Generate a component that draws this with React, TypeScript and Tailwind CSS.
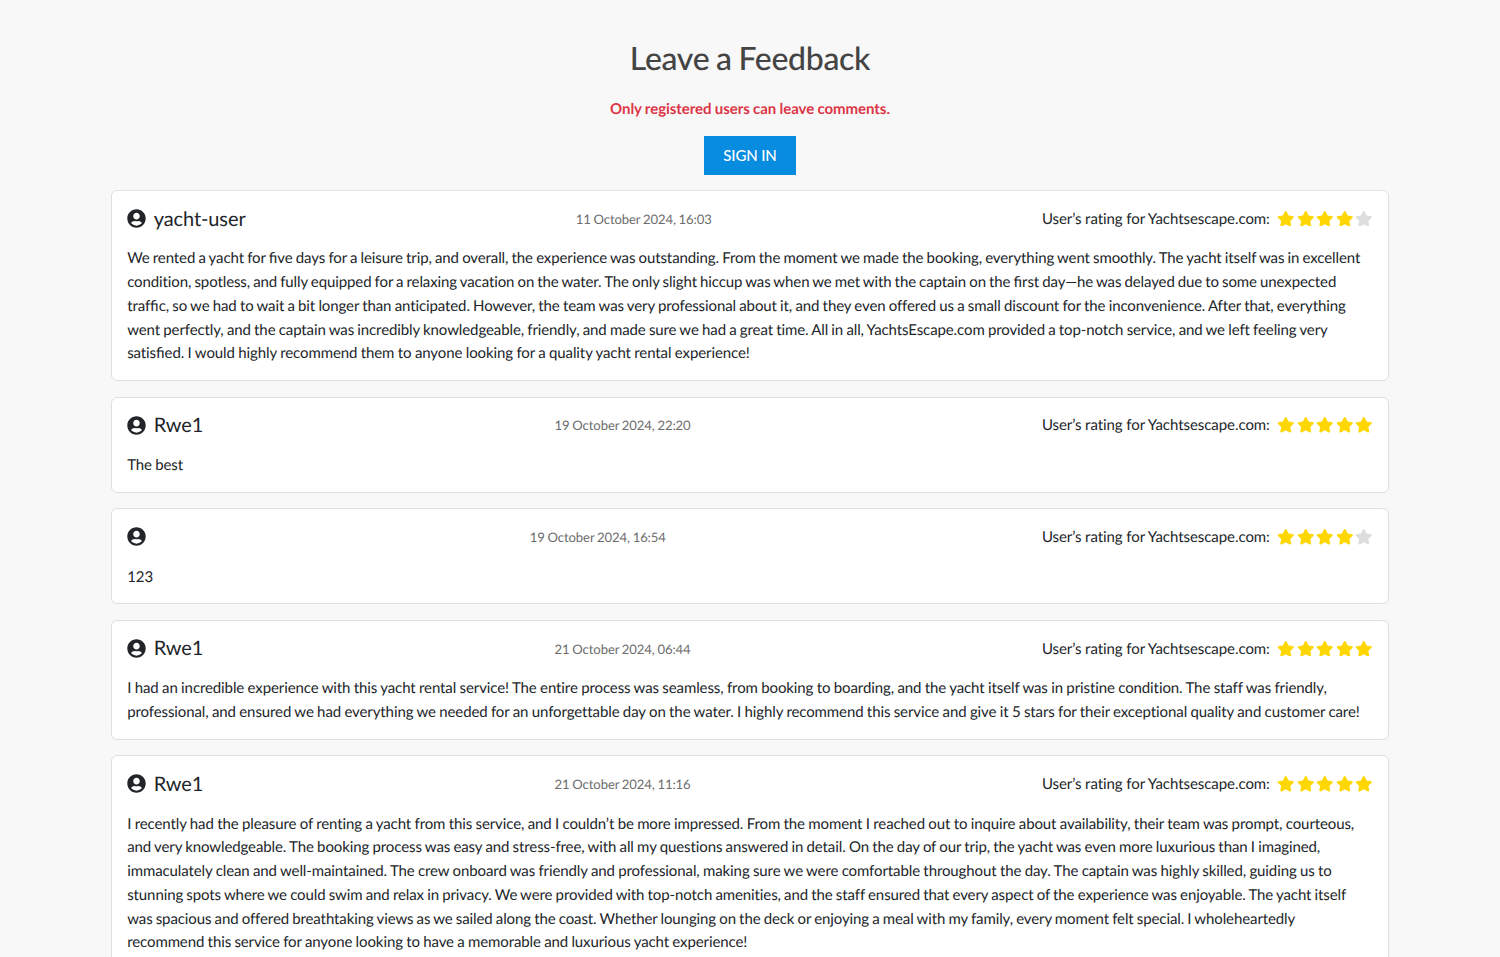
import React from "react";

type TextLine = { text: string; width?: number };
type Review = { user: string; date: string; rating: number; lines: TextLine[] };

const reviews: Review[] = [
  {
    user: "yacht-user",
    date: "11 October 2024, 16:03",
    rating: 4,
    lines: [
      { width: 1233, text: "We rented a yacht for five days for a leisure trip, and overall, the experience was outstanding. From the moment we made the booking, everything went smoothly. The yacht itself was in excellent" },
      { width: 1209, text: "condition, spotless, and fully equipped for a relaxing vacation on the water. The only slight hiccup was when we met with the captain on the first day—he was delayed due to some unexpected" },
      { width: 1218.5, text: "traffic, so we had to wait a bit longer than anticipated. However, the team was very professional about it, and they even offered us a small discount for the inconvenience. After that, everything" },
      { width: 1200.5, text: "went perfectly, and the captain was incredibly knowledgeable, friendly, and made sure we had a great time. All in all, YachtsEscape.com provided a top-notch service, and we left feeling very" },
      { width: 622.5, text: "satisfied. I would highly recommend them to anyone looking for a quality yacht rental experience!" },
    ],
  },
  { user: "Rwe1", date: "19 October 2024, 22:20", rating: 5, lines: [{ text: "The best" }] },
  { user: "", date: "19 October 2024, 16:54", rating: 4, lines: [{ text: "123" }] },
  {
    user: "Rwe1",
    date: "21 October 2024, 06:44",
    rating: 5,
    lines: [
      { width: 1199.5, text: "I had an incredible experience with this yacht rental service! The entire process was seamless, from booking to boarding, and the yacht itself was in pristine condition. The staff was friendly," },
      { width: 1232.5, text: "professional, and ensured we had everything we needed for an unforgettable day on the water. I highly recommend this service and give it 5 stars for their exceptional quality and customer care!" },
    ],
  },
  {
    user: "Rwe1",
    date: "21 October 2024, 11:16",
    rating: 5,
    lines: [
      { width: 1227, text: "I recently had the pleasure of renting a yacht from this service, and I couldn’t be more impressed. From the moment I reached out to inquire about availability, their team was prompt, courteous," },
      { width: 1193, text: "and very knowledgeable. The booking process was easy and stress-free, with all my questions answered in detail. On the day of our trip, the yacht was even more luxurious than I imagined," },
      { width: 1204.5, text: "immaculately clean and well-maintained. The crew onboard was friendly and professional, making sure we were comfortable throughout the day. The captain was highly skilled, guiding us to" },
      { width: 1219, text: "stunning spots where we could swim and relax in privacy. We were provided with top-notch amenities, and the staff ensured that every aspect of the experience was enjoyable. The yacht itself" },
      { width: 1168, text: "was spacious and offered breathtaking views as we sailed along the coast. Whether lounging on the deck or enjoying a meal with my family, every moment felt special. I wholeheartedly" },
      { width: 620, text: "recommend this service for anyone looking to have a memorable and luxurious yacht experience!" },
    ],
  },
];

function UserIcon() {
  return (
    <svg viewBox="0 0 496 512" className="h-[19px] w-[19px] shrink-0 fill-[#212529]">
      <path d="M248 8C111 8 0 119 0 256s111 248 248 248 248-111 248-248S385 8 248 8zm0 96c48.600 0 88 39.400 88 88s-39.400 88-88 88-88-39.400-88-88 39.400-88 88-88zm0 344c-58.700 0-111.300-26.600-146.500-68.200 18.800-35.400 55.600-59.800 98.500-59.800 2.400 0 4.800.4 7.100 1.100 13 4.200 26.600 6.900 40.900 6.900 14.300 0 28-2.700 40.900-6.900 2.300-.7 4.700-1.100 7.100-1.100 42.900 0 79.700 24.400 98.500 59.800C359.300 421.400 306.700 448 248 448z" />
    </svg>
  );
}

function Star({ on }: { on: boolean }) {
  return (
    <svg viewBox="0 0 576 512" className={`h-[15.500px] w-[17.500px] shrink-0 ${on ? "fill-[#ffd700]" : "fill-[#dddddd]"}`}>
      <path d="M259.300 17.800L194 150.200 47.900 171.500c-26.200 3.800-36.700 36.100-17.700 54.600l105.700 103-25 145.500c-4.500 26.300 23.200 46 46.400 33.700L288 439.600l130.700 68.700c23.200 12.200 50.900-7.400 46.400-33.700l-25-145.500 105.700-103c19-18.500 8.500-50.800-17.700-54.600L382 150.200 316.700 17.800c-11.700-23.600-45.600-23.900-57.400 0z" />
    </svg>
  );
}

// Joins only the "fi" pairs; every other ligature stays off.
function Line({ line }: { line: TextLine }) {
  return (
    <span
      className={line.width ? "block [text-align-last:justify] [word-spacing:-0.9px]" : "block"}
      style={{ width: line.width }}
    >
      {line.text.split(/(fi)/).map((part, i) =>
        part === "fi" ? (
          <span key={i} className="tracking-normal [font-variant-ligatures:common-ligatures]">fi</span>
        ) : (
          part
        ),
      )}
    </span>
  );
}

function ReviewCard({ review }: { review: Review }) {
  return (
    <article className="mb-[15.700px] rounded-md border border-[#dfdfdf] bg-white px-[15.200px] pt-[15.500px] pb-[13.900px]">
      <header className="flex h-6 items-center justify-between">
        <h2 className="flex items-center gap-[7.500px] text-[20px] leading-6 tracking-[-0.1px]">
          <UserIcon />
          <span>{review.user}</span>
        </h2>
        <time className="pt-[2px] text-[13.100px] tracking-[-0.1px] text-[#6c6c6c] [word-spacing:-0.500px]">{review.date}</time>
        <div className="flex items-center text-[15px]">
          <span className="mr-[7.500px] pt-px tracking-[-0.060px] [word-spacing:-0.1px]">User’s rating for Yachtsescape.com:</span>
          <div className="flex gap-[2px]">
            {[1, 2, 3, 4, 5].map((n) => (
              <Star key={n} on={n <= review.rating} />
            ))}
          </div>
        </div>
      </header>
      <p className="mt-[16.900px] text-[15px] leading-[23.700px] tracking-[-0.1px] whitespace-nowrap [word-spacing:-0.500px]">
        {review.lines.map((line) => (
          <Line key={line.text} line={line} />
        ))}
      </p>
    </article>
  );
}

export default function App() {
  return (
    <main className="h-[957px] overflow-hidden bg-[#f8f8f8] font-['Lato',sans-serif] text-[#212529] [font-variant-ligatures:none] [text-rendering:geometricPrecision]">
      <div className="mx-auto flex w-[1278px] flex-col">
        <h1 className="mt-[38px] text-center text-[32px] leading-10 font-medium tracking-[-0.320px] text-[#444444] [word-spacing:-1px]">Leave a Feedback</h1>
        <p className="mt-[19px] text-center text-[15px] leading-6 font-bold tracking-[-0.050px] text-[#dc3545] [word-spacing:-0.300px]">Only registered users can leave comments.</p>
        <button className="mx-auto mt-[15px] mb-[15.100px] h-[39px] w-[92px] bg-[#078ce0] text-[15px] font-medium tracking-[-0.100px] text-white [word-spacing:-0.300px]">SIGN IN</button>
        {reviews.map((review) => (
          <ReviewCard key={review.date} review={review} />
        ))}
      </div>
    </main>
  );
}
